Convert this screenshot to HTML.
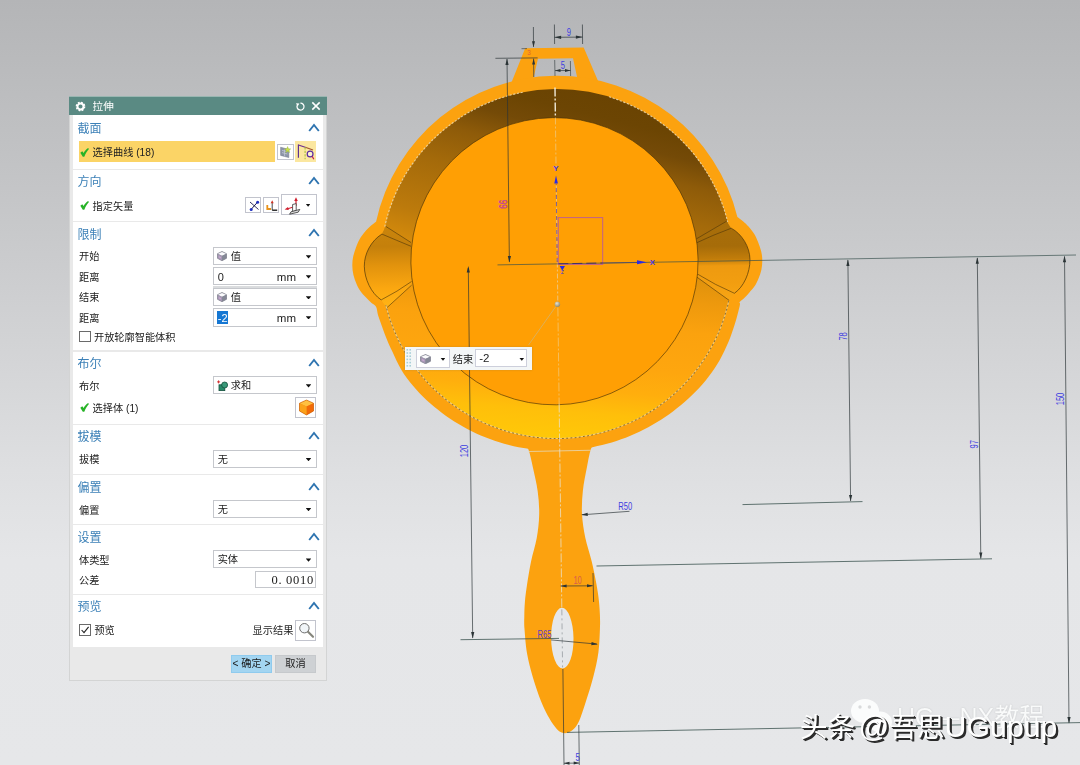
<!DOCTYPE html>
<html lang="zh-CN">
<head>
<meta charset="utf-8">
<title>拉伸</title>
<style>
html,body{margin:0;padding:0;}
body{width:1080px;height:765px;overflow:hidden;position:relative;
  font-family:"Liberation Sans","Noto Sans CJK SC",sans-serif;
  background:linear-gradient(to bottom,#b4b5b7 0px,#c5c6c8 200px,#d6d7d9 385px,#dedfe1 470px,#e5e6e8 560px,#e6e7e9 765px);}
#scene{position:absolute;left:0;top:0;width:1080px;height:765px;}
#dlg{will-change:transform;position:absolute;left:69px;top:96px;width:258px;height:585px;background:#e9e9e9;box-shadow:0 0 0 1px #d3d4d4 inset;}
#dlg .hd{position:absolute;left:0;top:0;width:258px;height:19px;background:#5a8a83;color:#fff;box-shadow:0 1px 0 #99b6b1 inset;}
#dlg .hd .ttl{position:absolute;left:23.6px;top:2.5px;font-size:10.6px;line-height:14px;white-space:nowrap;}
#dlg .sec{position:absolute;left:4px;width:250px;background:#fff;}
#dlg .st{position:absolute;font-size:12px;color:#3c80b7;line-height:16px;white-space:nowrap;}
#dlg .lb{position:absolute;font-size:10.2px;color:#222;line-height:14px;white-space:nowrap;}
#dlg .chev{position:absolute;}
#dlg .dd{position:absolute;box-sizing:border-box;border:1px solid #c5c7cc;background:#fff;}
#dlg .dd .t{position:absolute;top:calc(50% + 1px);transform:translateY(-50%);font-size:10.2px;line-height:14px;color:#1a1a1a;white-space:nowrap;}
#dlg .ar{position:absolute;right:4.2px;top:7px;width:5.6px;height:3.3px;background:#111;clip-path:polygon(0 0,100% 0,50% 100%);}
#dlg .ib{position:absolute;box-sizing:border-box;border:1px solid #c2c4cd;background:#fff;}
#dlg .cb{position:absolute;width:11.6px;height:11.6px;box-sizing:border-box;border:1px solid #6a6a6a;background:#fff;}
#dlg .btn{position:absolute;box-sizing:border-box;border:1px solid #999;font-size:10.2px;line-height:16px;text-align:center;color:#1a1a1a;white-space:nowrap;}
#fbox{will-change:transform;position:absolute;left:404.7px;top:346.8px;width:127.1px;height:22.9px;background:#f3f6f7;box-shadow:0 0 2px rgba(120,110,80,0.35);}
#fbox .grip{position:absolute;left:1px;top:1px;}
#fbox .fd{position:absolute;box-sizing:border-box;border:1px solid #cdcfdb;background:#fff;}
#fbox .ar{position:absolute;width:5px;height:3px;background:#111;clip-path:polygon(0 0,100% 0,50% 100%);}
#fbox .fl{position:absolute;left:47.8px;top:5.6px;font-size:10.2px;line-height:14px;color:#1a1a1a;white-space:nowrap;}
#fbox .fv{position:absolute;left:3.6px;top:1.7px;font-size:11.5px;line-height:14px;color:#222;white-space:nowrap;}
#wm2{will-change:transform;position:absolute;left:849px;top:697px;width:210px;height:42px;font-size:25px;line-height:40px;color:#f9fafa;white-space:nowrap;text-shadow:0 0 1.5px #b9bbbd;}
#wm{will-change:transform;position:absolute;left:799.5px;top:708.5px;font-size:28.6px;line-height:36px;color:#fff;white-space:nowrap;letter-spacing:0px;text-shadow:2.2px 2.2px 0.5px #2a2a2a,1.1px 1.1px 0.4px #2a2a2a;}
#wm .c{font-size:27.6px;}
#wm .l{font-size:30.3px;word-spacing:-5px;}
</style>
</head>
<body>
<svg id="scene" viewBox="0 0 1080 765">
<defs>
<linearGradient id="wall" gradientUnits="userSpaceOnUse" x1="45" y1="-172" x2="-45" y2="172">
<stop offset="0" stop-color="#6a4302"/>
<stop offset="0.07" stop-color="#6c4503"/>
<stop offset="0.13" stop-color="#744a07"/>
<stop offset="0.2" stop-color="#8e5b09"/>
<stop offset="0.3" stop-color="#a46a0a"/>
<stop offset="0.45" stop-color="#bc7a0c"/>
<stop offset="0.52" stop-color="#cf870c"/>
<stop offset="0.6" stop-color="#ec980d"/>
<stop offset="0.67" stop-color="#f9a10e"/>
<stop offset="0.73" stop-color="#fea60e"/>
<stop offset="0.82" stop-color="#ffad0d"/>
<stop offset="0.91" stop-color="#ffc00a"/>
<stop offset="1" stop-color="#ffc808"/>
</linearGradient>
<linearGradient id="wall2" gradientUnits="userSpaceOnUse" x1="8" y1="0" x2="-8" y2="175">
<stop offset="0" stop-color="#dc900c"/>
<stop offset="0.17" stop-color="#ee990d"/>
<stop offset="0.34" stop-color="#fba20e"/>
<stop offset="0.57" stop-color="#fea60e"/>
<stop offset="0.71" stop-color="#ffae0d"/>
<stop offset="0.84" stop-color="#ffbf0a"/>
<stop offset="1" stop-color="#ffc808"/>
</linearGradient>
<linearGradient id="chR" gradientUnits="userSpaceOnUse" x1="0" y1="-38" x2="0" y2="38">
<stop offset="0" stop-color="#a86e0a"/><stop offset="0.3" stop-color="#a66c09"/><stop offset="0.47" stop-color="#c27d0a"/><stop offset="0.56" stop-color="#ee9a10"/><stop offset="0.8" stop-color="#f29e10"/><stop offset="1" stop-color="#f7a515"/>
</linearGradient>
<linearGradient id="chL" gradientUnits="userSpaceOnUse" x1="0" y1="-38" x2="0" y2="38">
<stop offset="0" stop-color="#c9840c"/><stop offset="0.25" stop-color="#c5800b"/><stop offset="0.5" stop-color="#e2930d"/><stop offset="0.8" stop-color="#fba710"/><stop offset="1" stop-color="#ffb214"/>
</linearGradient>
<radialGradient id="ball" cx="0.4" cy="0.35" r="0.7"><stop offset="0" stop-color="#e8e4d0"/><stop offset="1" stop-color="#8a8468"/></radialGradient>
</defs>
<g id="pan" transform="translate(557.3,263.4) rotate(-0.75)">
<path d="M-44.5,-179 L-29.3,-215.5 L29.2,-215.5 L44.3,-179 Z M-22,-183 L-16.7,-204.9 L18.4,-204.9 L22.8,-183 Z" fill="#fca20f" fill-rule="evenodd"/>
<path d="M180.7,-44.0 C181.7,-43.2 184.7,-41.1 186.5,-39.5 C188.3,-37.9 189.9,-36.5 191.7,-34.3 C193.5,-32.1 195.9,-29.1 197.5,-26.5 C199.1,-23.9 200.0,-21.3 201.1,-18.5 C202.2,-15.7 203.3,-12.5 204.0,-9.5 C204.7,-6.5 205.0,-3.6 205.0,-0.5 C205.0,2.6 204.7,6.0 204.0,9.0 C203.3,12.0 202.2,14.9 201.1,17.6 C200.0,20.3 198.9,22.7 197.3,25.0 C195.7,27.3 193.5,29.6 191.7,31.6 C189.9,33.6 188.2,35.4 186.5,37.0 C184.8,38.6 182.5,39.9 181.8,41.0 C181.1,42.1 182.5,41.4 182.1,43.4 C181.8,45.4 180.6,49.8 179.7,52.9 C178.9,56.1 177.9,59.2 176.9,62.4 C175.8,65.5 174.8,68.6 173.7,71.7 C172.6,74.8 171.4,77.9 170.1,80.9 C168.7,84.0 167.3,87.0 165.9,89.9 C164.4,92.9 162.8,95.9 161.2,98.7 C159.5,101.6 157.7,104.4 155.8,107.1 C154.0,109.8 152.0,112.5 149.9,115.1 C147.9,117.8 145.8,120.3 143.6,122.8 C141.4,125.3 139.0,127.7 136.7,130.0 C134.3,132.3 131.9,134.6 129.4,136.8 C127.0,139.0 124.5,141.2 121.9,143.3 C119.3,145.3 116.7,147.3 114.0,149.3 C111.3,151.2 108.6,153.1 105.8,154.9 C103.1,156.7 100.3,158.5 97.4,160.2 C94.6,161.8 91.7,163.4 88.8,165.0 C85.8,166.5 82.9,167.9 79.9,169.3 C76.9,170.7 73.9,172.0 70.8,173.2 C67.7,174.5 64.6,175.6 61.5,176.7 C58.4,177.8 55.3,178.8 52.1,179.7 C48.9,180.6 45.7,181.4 42.5,182.2 C39.3,182.9 36.1,183.6 32.8,184.2 C29.6,184.8 26.3,185.3 23.0,185.7 C19.8,186.1 16.5,186.4 13.2,186.7 C9.9,186.9 6.6,187.0 3.3,187.2 C0.0,187.3 -3.3,187.4 -6.6,187.3 C-9.9,187.3 -13.2,187.1 -16.5,186.8 C-19.8,186.6 -23.1,186.2 -26.4,185.8 C-29.7,185.4 -32.9,184.8 -36.2,184.2 C-39.5,183.6 -42.7,182.9 -45.9,182.2 C-49.1,181.4 -52.3,180.5 -55.5,179.6 C-58.7,178.6 -61.8,177.6 -65.0,176.5 C-68.1,175.4 -71.2,174.2 -74.3,172.9 C-77.3,171.7 -80.3,170.3 -83.3,168.9 C-86.3,167.4 -89.3,165.9 -92.2,164.4 C-95.1,162.8 -98.0,161.1 -100.8,159.4 C-103.7,157.6 -106.5,155.8 -109.2,153.9 C-111.9,152.1 -114.6,150.1 -117.2,148.1 C-119.9,146.0 -122.5,143.9 -125.0,141.8 C-127.5,139.6 -130.0,137.4 -132.4,135.1 C-134.8,132.8 -137.1,130.4 -139.4,128.0 C-141.6,125.5 -143.8,123.0 -145.9,120.4 C-148.0,117.8 -150.0,115.2 -152.0,112.5 C-153.9,109.8 -155.8,107.1 -157.4,104.2 C-159.1,101.3 -160.5,98.3 -162.0,95.3 C-163.4,92.3 -164.6,89.3 -166.0,86.3 C-167.3,83.3 -168.8,80.3 -170.0,77.3 C-171.3,74.3 -172.5,71.2 -173.6,68.1 C-174.7,65.1 -175.8,62.0 -176.8,58.9 C-177.9,55.8 -179.0,52.6 -179.9,49.6 C-180.7,46.6 -180.7,43.1 -181.8,41.0 C-182.9,38.9 -184.8,38.6 -186.5,37.0 C-188.2,35.4 -189.9,33.6 -191.7,31.6 C-193.5,29.6 -195.7,27.3 -197.3,25.0 C-198.9,22.7 -200.0,20.3 -201.1,17.6 C-202.2,14.9 -203.3,12.0 -204.0,9.0 C-204.7,6.0 -205.0,2.6 -205.0,-0.5 C-205.0,-3.6 -204.7,-6.5 -204.0,-9.5 C-203.3,-12.5 -202.2,-15.7 -201.1,-18.5 C-200.0,-21.3 -199.1,-23.9 -197.5,-26.5 C-195.9,-29.1 -193.5,-32.1 -191.7,-34.3 C-189.9,-36.5 -188.3,-37.9 -186.5,-39.5 C-184.7,-41.1 -181.7,-43.2 -180.7,-44.0 A185.5,185.5 0 0 1 180.7,-44 Z" fill="#fca20f"/>
<path d="M42.0,172.0 C41.0,173.3 37.8,177.7 36.0,180.0 C34.2,182.3 32.7,182.0 31.2,186.0 C29.7,190.0 28.4,197.1 27.0,204.0 C25.6,210.9 23.5,219.8 22.6,227.6 C21.7,235.4 21.1,243.2 21.4,251.0 C21.7,258.8 22.9,266.8 24.4,274.6 C25.9,282.4 28.6,290.1 30.4,298.0 C32.2,305.9 33.9,315.0 35.0,321.7 C36.1,328.4 36.7,332.9 37.2,338.0 C37.7,343.1 37.9,347.5 38.0,352.0 C38.1,356.5 38.2,358.8 37.9,365.0 C37.6,371.2 37.2,381.4 36.0,389.5 C34.8,397.6 32.8,405.6 30.6,413.7 C28.4,421.8 25.3,431.1 23.0,438.0 C20.7,444.9 18.8,450.7 17.0,455.0 C15.2,459.3 13.8,461.7 12.0,464.0 C10.2,466.3 8.2,467.6 6.5,468.6 C4.8,469.6 3.2,469.8 1.5,469.8 C-0.2,469.8 -1.9,469.4 -3.5,468.4 C-5.0,467.4 -6.1,466.2 -7.8,464.0 C-9.5,461.8 -11.5,459.3 -13.8,455.0 C-16.1,450.7 -19.1,444.9 -21.8,438.0 C-24.5,431.1 -27.5,421.8 -29.8,413.7 C-32.1,405.6 -34.1,397.6 -35.4,389.5 C-36.7,381.4 -37.2,371.2 -37.6,365.0 C-38.0,358.8 -37.7,356.5 -37.6,352.0 C-37.5,347.5 -37.3,343.1 -36.8,338.0 C-36.3,332.9 -35.7,328.4 -34.6,321.7 C-33.5,315.0 -31.9,305.9 -30.2,298.0 C-28.5,290.1 -25.7,282.4 -24.2,274.6 C-22.7,266.8 -21.7,258.8 -21.4,251.0 C-21.1,243.2 -21.7,235.4 -22.6,227.6 C-23.5,219.8 -25.6,210.9 -27.0,204.0 C-28.4,197.1 -29.7,190.0 -31.2,186.0 C-32.7,182.0 -34.2,182.3 -36.0,180.0 C-37.8,177.7 -41.0,173.3 -42.0,172.0 Z" fill="#fca20f"/>
<ellipse cx="0.1" cy="374.8" rx="11.2" ry="30.3" fill="#e5e7e9"/>
<path d="M-176.5,1 L-176.5,0.3 A176,174.8 0 0 1 175.5,0.3 L175.5,1 Z" fill="url(#wall)"/>
<path d="M175.5,0.3 A176,174.8 0 0 1 -176.5,0.3 Z" fill="url(#wall2)"/>
<path d="M139.2,-22.6 L169.7,-39.9 L174.4,-32.9 C185,-27 192.7,-14 192.7,-1.5 C192.7,12 186,26 176.7,32.2 L171.3,39.2 L139.2,15.4 Z" fill="url(#chR)"/>
<path d="M-146,-22.8 L-171.1,-39.3 L-175,-31.6 C-186,-25 -193,-12 -193,0.3 C-193,13 -186.5,27.5 -176.6,34.2 L-171.1,42.2 L-146,19.9 Z" fill="url(#chL)"/>
<path d="M174.4,-32.9 C185,-27 192.7,-14 192.7,-1.5 C192.7,12 186,26 176.7,32.2 M-175,-31.6 C-186,-25 -193,-12 -193,0.3 C-193,13 -186.5,27.5 -176.6,34.2" stroke="#4f3608" stroke-width="0.7" fill="none"/>
<path d="M169.7,-39.9 L139.2,-22.6 M174.4,-32.9 Q155,-26 139.2,-18.6 M176.7,32.2 Q158,24 139.2,12 M171.3,39.2 L139.2,15.4 M-171.1,-39.3 L-146,-22.8 M-175,-31.6 Q-160,-25 -146,-19 M-176.6,34.2 Q-160,26 -146,16.2 M-171.1,42.2 L-146,19.9" stroke="#4f3608" stroke-width="0.6" fill="none"/>
<circle cx="-2.8" cy="-2.2" r="143.6" fill="#ff9f04" stroke="#4a3208" stroke-width="0.65"/>
<path d="M-172.0,-39.0 A176,174.8 0 0 1 -31.1,-171.8 M53.9,-165.9 A176,174.8 0 0 1 171.0,-39.0" fill="none" stroke="#ecd9b0" stroke-width="1.1" stroke-dasharray="2.2 1.6" opacity="0.85"/>
<path d="M171.0,39.6 A176,174.8 0 0 1 -172.0,39.6" fill="none" stroke="#f0dca6" stroke-width="1.1" opacity="0.7"/>
<path d="M171.0,39.6 A176,174.8 0 0 1 -172.0,39.6" fill="none" stroke="#5e4a1e" stroke-width="1" stroke-dasharray="1.8 2.4" opacity="0.7"/>
<path d="M-31.5,187.6 L31,187.2" stroke="#e4dcc4" stroke-width="1" opacity="0.75"/>
<path d="M0,-176 L0,-146" stroke="#f0ead8" stroke-width="1.4" stroke-dasharray="9 2 2 2"/>
<path d="M0,-146 L0,-96" stroke="#e9d9b0" stroke-width="1" stroke-dasharray="7 2 2 2" opacity="0.55"/>
<path d="M0,-78 L0,40" stroke="#e6dcc8" stroke-width="1" stroke-dasharray="5 2 2 2" opacity="0.6"/>
<path d="M0,44 L0,140" stroke="#f0dcae" stroke-width="1" stroke-dasharray="9 2 2 2" opacity="0.5"/>
<path d="M0,140 L0,344" stroke="#ebe1c8" stroke-width="1" stroke-dasharray="9 2 2 2" opacity="0.8"/>
<path d="M0,346 L0,404" stroke="#9aa0a4" stroke-width="0.9" stroke-dasharray="6 3 2 3" opacity="0.9"/>
</g>
<g id="dims">
<path d="M497.5,264.9 L1076,255.0" stroke="#36504c" stroke-width="0.68" fill="none" />
<path d="M554.4,24.5 L554.6,44" stroke="#2b3436" stroke-width="0.68" fill="none" />
<path d="M582.4,24.5 L582.6,44" stroke="#2b3436" stroke-width="0.68" fill="none" />
<path d="M554.5,37.3 L582.5,37.1" stroke="#2b3436" stroke-width="0.68" fill="none" />
<path d="M554.6,37.3 L561.1,35.7 L561.1,38.9 Z" fill="#2b3436"/>
<path d="M582.4,37.1 L575.9,38.7 L575.9,35.5 Z" fill="#2b3436"/>
<text transform="translate(568.8,31.4) scale(0.66,1)" font-family="Liberation Sans, sans-serif" font-size="11.5" fill="#3d3de0" text-anchor="middle" dominant-baseline="central">9</text>
<path d="M554.7,60 L555,76" stroke="#2b3436" stroke-width="0.59" fill="none" />
<path d="M570.4,61 L570.6,76" stroke="#2b3436" stroke-width="0.59" fill="none" />
<path d="M555,70.6 L570.5,70.5" stroke="#2b3436" stroke-width="0.68" fill="none" />
<path d="M555.0,70.6 L560.5,69.1 L560.5,72.1 Z" fill="#2b3436"/>
<path d="M570.5,70.5 L565.0,72.0 L565.0,69.0 Z" fill="#2b3436"/>
<text transform="translate(562.8,65.2) scale(0.66,1)" font-family="Liberation Sans, sans-serif" font-size="11.5" fill="#3d3de0" text-anchor="middle" dominant-baseline="central">5</text>
<path d="M533.4,27 L533.5,47" stroke="#2b3436" stroke-width="0.68" fill="none" />
<path d="M533.5,47.3 L532.0,41.3 L535.0,41.3 Z" fill="#2b3436"/>
<path d="M533.6,58.6 L533.8,77" stroke="#2b3436" stroke-width="0.68" fill="none" />
<path d="M533.6,58.4 L535.1,64.4 L532.1,64.4 Z" fill="#2b3436"/>
<path d="M521.5,48.7 L527,48.6" stroke="#2b3436" stroke-width="0.59" fill="none" />
<text transform="translate(529,52.6) scale(0.8,1)" font-family="Liberation Sans, sans-serif" font-size="8" fill="#e0603a" text-anchor="middle" dominant-baseline="central">3</text>
<path d="M495.4,58.3 L537.6,57.9" stroke="#2b3436" stroke-width="0.68" fill="none" />
<path d="M507,59 L509.4,262" stroke="#2b3436" stroke-width="0.68" fill="none" />
<path d="M507.0,58.6 L508.6,65.1 L505.4,65.1 Z" fill="#2b3436"/>
<path d="M509.4,262.4 L507.8,255.9 L511.0,255.9 Z" fill="#2b3436"/>
<text transform="translate(502.8,204.2) rotate(-90) scale(0.7,1)" font-family="Liberation Sans, sans-serif" font-size="11.5" fill="#c2409c" stroke="#c2409c" stroke-width="0.35" text-anchor="middle" dominant-baseline="central">66</text>
<path d="M468.3,268 L472.7,638" stroke="#2b3436" stroke-width="0.68" fill="none" />
<path d="M468.3,266.0 L469.9,272.5 L466.7,272.5 Z" fill="#2b3436"/>
<path d="M472.7,638.6 L471.1,632.1 L474.3,632.1 Z" fill="#2b3436"/>
<path d="M460.5,639.7 L559,638.4" stroke="#36504c" stroke-width="0.77" fill="none" />
<text transform="translate(464.2,451) rotate(-90) scale(0.66,1)" font-family="Liberation Sans, sans-serif" font-size="11.5" fill="#3d3de0" text-anchor="middle" dominant-baseline="central">120</text>
<path d="M847.9,260 L850.6,501" stroke="#2b3436" stroke-width="0.68" fill="none" />
<path d="M847.9,259.6 L849.5,266.1 L846.3,266.1 Z" fill="#2b3436"/>
<path d="M850.6,501.6 L849.0,495.1 L852.2,495.1 Z" fill="#2b3436"/>
<path d="M742.5,504.6 L862.5,501.6" stroke="#36504c" stroke-width="0.77" fill="none" />
<text transform="translate(843,336.4) rotate(-90) scale(0.66,1)" font-family="Liberation Sans, sans-serif" font-size="11.5" fill="#3d3de0" text-anchor="middle" dominant-baseline="central">78</text>
<path d="M977.3,258 L980.8,558.6" stroke="#2b3436" stroke-width="0.68" fill="none" />
<path d="M977.3,257.3 L978.9,263.8 L975.7,263.8 Z" fill="#2b3436"/>
<path d="M980.8,559.0 L979.2,552.5 L982.4,552.5 Z" fill="#2b3436"/>
<path d="M596.5,566 L992,558.8" stroke="#36504c" stroke-width="0.77" fill="none" />
<text transform="translate(973.6,444.2) rotate(-90) scale(0.66,1)" font-family="Liberation Sans, sans-serif" font-size="11.5" fill="#3d3de0" text-anchor="middle" dominant-baseline="central">97</text>
<path d="M1064.5,256.5 L1069,723" stroke="#2b3436" stroke-width="0.68" fill="none" />
<path d="M1064.5,255.8 L1066.1,262.3 L1062.9,262.3 Z" fill="#2b3436"/>
<path d="M1069.0,723.4 L1067.4,716.9 L1070.6,716.9 Z" fill="#2b3436"/>
<path d="M567,732.4 L1080,722.6" stroke="#36504c" stroke-width="0.77" fill="none" />
<text transform="translate(1060,399) rotate(-90) scale(0.66,1)" font-family="Liberation Sans, sans-serif" font-size="11.5" fill="#3d3de0" text-anchor="middle" dominant-baseline="central">150</text>
<path d="M629.5,511.3 L582,514.8" stroke="#2b3436" stroke-width="0.68" fill="none" />
<path d="M581.2,514.8 L587.6,512.8 L587.8,515.9 Z" fill="#2b3436"/>
<text transform="translate(625.2,506) scale(0.66,1)" font-family="Liberation Sans, sans-serif" font-size="11.5" fill="#3d3de0" text-anchor="middle" dominant-baseline="central">R50</text>
<path d="M593,573 L593.6,602" stroke="#2b3436" stroke-width="0.68" fill="none" />
<path d="M560.6,586 L592.6,585.8" stroke="#2b3436" stroke-width="0.68" fill="none" />
<path d="M560.6,586.0 L566.6,584.5 L566.6,587.5 Z" fill="#2b3436"/>
<path d="M593.0,585.8 L587.0,587.3 L587.0,584.3 Z" fill="#2b3436"/>
<text transform="translate(577.6,580) scale(0.66,1)" font-family="Liberation Sans, sans-serif" font-size="11.5" fill="#d8604a" text-anchor="middle" dominant-baseline="central">10</text>
<path d="M551,639.9 L597,644.1" stroke="#2b3436" stroke-width="0.68" fill="none" />
<path d="M597.9,644.2 L591.3,645.2 L591.6,642.0 Z" fill="#2b3436"/>
<text transform="translate(544.4,634) scale(0.66,1)" font-family="Liberation Sans, sans-serif" font-size="11.5" fill="#5a3ad0" text-anchor="middle" dominant-baseline="central">R65</text>
<path d="M562.9,669 L564,765" stroke="#2b3436" stroke-width="0.68" fill="none" />
<path d="M578.8,725 L579.3,765" stroke="#2b3436" stroke-width="0.68" fill="none" />
<path d="M564,763.2 L579.2,763.1" stroke="#2b3436" stroke-width="0.68" fill="none" />
<path d="M564.0,763.2 L569.5,761.7 L569.5,764.7 Z" fill="#2b3436"/>
<path d="M579.2,763.1 L573.7,764.6 L573.7,761.6 Z" fill="#2b3436"/>
<text transform="translate(577.6,757.2) scale(0.66,1)" font-family="Liberation Sans, sans-serif" font-size="11.5" fill="#3d3de0" text-anchor="middle" dominant-baseline="central">5</text>
</g>
<g id="csys">
<rect x="558.3" y="217.6" width="44.4" height="46.8" fill="none" stroke="#c0608c" stroke-width="1"/>
<path d="M558.3,263.8 L603,263" stroke="#3a2a6a" stroke-width="0.9" stroke-dasharray="10 4"/>
<path d="M557.2,262 L556.2,184 " stroke="#5a4ab0" stroke-width="0.8" stroke-dasharray="4 3"/>
<path d="M556,175.5 L557.9,183.6 L554.3,183.6 Z" fill="#2a2ae6"/>
<path d="M603,263 L637,262.4" stroke="#4a4a70" stroke-width="0.8"/>
<path d="M646.8,262.2 L637,264.3 L637,260.2 Z" fill="#2a2ae6"/>
<path d="M559.6,266 L565,266 L562.3,270.4 Z" fill="#2a2ae6"/>
<text x="556" y="168.4" font-family="Liberation Sans, sans-serif" font-size="8" font-weight="bold" fill="#4a3ae0" text-anchor="middle" dominant-baseline="central">Y</text>
<text x="652.4" y="262.6" font-family="Liberation Sans, sans-serif" font-size="8" font-weight="bold" fill="#4a3ae0" text-anchor="middle" dominant-baseline="central">X</text>
<text x="562.4" y="272" font-family="Liberation Sans, sans-serif" font-size="4.5" fill="#2a2ae6" text-anchor="middle" dominant-baseline="central">Z</text>
<path d="M556.5,305.5 L528.5,345" stroke="#c9b98a" stroke-width="0.8" opacity="0.8"/>
<circle cx="557.4" cy="304.2" r="2.7" fill="url(#ball)"/>
</g>
</svg>
<div id="dlg">
<div class="hd">
<svg style="position:absolute;left:6px;top:4.5px" width="11" height="11" viewBox="0 0 11 11"><circle cx="5.5" cy="5.5" r="4" fill="none" stroke="#fff" stroke-width="1.7" stroke-dasharray="1.8 1.34" /><circle cx="5.5" cy="5.5" r="3" fill="none" stroke="#fff" stroke-width="1.9"/></svg>
<span class="ttl">拉伸</span>
<svg style="position:absolute;left:225.5px;top:4.5px" width="11" height="11" viewBox="0 0 11 11"><path d="M5.4,2.1 A3.5,3.5 0 1 1 2.3,4.2" fill="none" stroke="#fff" stroke-width="1.25"/><path d="M1,2.2 L4.4,2.6 L2.6,5.4 Z" fill="#fff"/></svg>
<svg style="position:absolute;left:242px;top:5px" width="10" height="10" viewBox="0 0 10 10"><path d="M1.3,1.4 L8.7,8.6 M8.7,1.4 L1.3,8.6" stroke="#fff" stroke-width="1.55" fill="none"/></svg>
</div>
<div class="sec" style="top:19.0px;height:53.8px"></div>
<div class="st" style="left:8.5px;top:24.9px">截面</div>
<svg class="chev" style="left:239px;top:26.6px" width="12" height="9" viewBox="0 0 12 9"><polyline points="1.2,8 6,2 10.8,8" fill="none" stroke="#2e74b0" stroke-width="1.9"/></svg>
<div style="position:absolute;left:10px;top:44.8px;width:196.3px;height:21.7px;background:#fbd466"></div>
<svg style="position:absolute;left:11px;top:51.5px" width="9" height="9" viewBox="0 0 9 9"><path d="M0.3,4.7 L2.3,3.2 L3.6,5 C4.7,3 6.2,1.3 8.1,0.1 L8.9,1 C7,3.2 5.5,5.8 4.3,8.8 L2.8,8.8 Z" fill="#27b327"/></svg>
<div class="lb" style="left:23.6px;top:50px;">选择曲线 (18)</div>
<div class="ib" style="left:208.2px;top:48px;width:16.4px;height:16.2px"><svg width="15" height="15" viewBox="0 0 15 15" style="position:absolute;left:0px;top:0px"><path d="M2.6,2.2 L10.8,4.4 L10.8,12.6 L2.6,10.4 Z" fill="#8d95a8" stroke="#6f7788" stroke-width="0.5"/><path d="M4,5.4 L9.4,6.8 M4,7.6 L9.4,9 M6.6,4.4 L6.6,11.4" stroke="#c9cedb" stroke-width="0.7" fill="none"/><path d="M9.6,1.6 L10.4,3.8 L12.7,3.9 L10.9,5.3 L11.5,7.6 L9.6,6.3 L7.7,7.6 L8.3,5.3 L6.5,3.9 L8.8,3.8 Z" fill="#cbe24c" stroke="#8fae2c" stroke-width="0.4"/></svg></div>
<div style="position:absolute;left:226.2px;top:44.8px;width:21.3px;height:21.7px;background:#fbe7a0"><svg width="21" height="22" viewBox="0 0 21 22" style="position:absolute;left:0;top:0"><path d="M3.4,3.4 L3.4,16.8" stroke="#5a2d91" stroke-width="1.15"/><path d="M3.4,4 L11,6.6" stroke="#6a2d91" stroke-width="1.1"/><path d="M11,6.6 L18,9" stroke="#a0522d" stroke-width="1.1"/><path d="M10.1,6.2 L10.1,18.2" stroke="#a9c23a" stroke-width="1.1" stroke-dasharray="2.4 1.1"/><circle cx="15.1" cy="13" r="2.9" fill="#fdf3cf" stroke="#5a2da0" stroke-width="1.2"/><path d="M17.2,15.2 L18.8,18.2" stroke="#c02050" stroke-width="1.2"/></svg></div>
<div class="sec" style="top:74.3px;height:51.0px"></div>
<div class="st" style="left:8.5px;top:77.9px">方向</div>
<svg class="chev" style="left:239px;top:79.6px" width="12" height="9" viewBox="0 0 12 9"><polyline points="1.2,8 6,2 10.8,8" fill="none" stroke="#2e74b0" stroke-width="1.9"/></svg>
<svg style="position:absolute;left:11px;top:105px" width="9" height="9" viewBox="0 0 9 9"><path d="M0.3,4.7 L2.3,3.2 L3.6,5 C4.7,3 6.2,1.3 8.1,0.1 L8.9,1 C7,3.2 5.5,5.8 4.3,8.8 L2.8,8.8 Z" fill="#27b327"/></svg>
<div class="lb" style="left:23.6px;top:103.6px;">指定矢量</div>
<div class="ib" style="left:176.3px;top:101px;width:16.2px;height:15.8px"><svg width="14" height="14" viewBox="0 0 14 14" style="position:absolute;left:0.5px;top:0.5px"><path d="M3,3 L11.5,10.5" stroke="#1a1a50" stroke-width="0.9"/><path d="M11,2.6 L3.6,11" stroke="#1a1a50" stroke-width="1"/><circle cx="10.6" cy="3.2" r="1.5" fill="#2030c0"/><circle cx="4.2" cy="10.4" r="1.5" fill="#2030c0"/></svg></div>
<div class="ib" style="left:194.3px;top:101px;width:16.2px;height:15.8px"><svg width="14" height="14" viewBox="0 0 14 14" style="position:absolute;left:0.5px;top:0.5px"><path d="M2.3,6 L2.3,10 L6,10" fill="none" stroke="#e8921a" stroke-width="1.8"/><path d="M7.2,3 L7.2,11.2" stroke="#333" stroke-width="0.9"/><path d="M7.2,1.2 L8.7,4.2 L5.7,4.2 Z" fill="#d03020"/><path d="M7.2,11.2 L12.2,11.2" stroke="#111" stroke-width="1.3"/></svg></div>
<div class="ib" style="left:212px;top:98px;width:35.5px;height:21px"><svg width="22" height="20" viewBox="0 0 22 20" style="position:absolute;left:0.5px;top:0px"><path d="M13,5 L13,11" stroke="#d02030" stroke-width="1.2"/><path d="M13,2.2 L14.8,6 L11.2,6 Z" fill="#d02030"/><path d="M9.5,12.3 L4,14" stroke="#d02030" stroke-width="1.2"/><path d="M1.6,14.6 L5,12 L5.8,15 Z" fill="#d02030"/><path d="M9.6,9.5 L9.6,16.6 L13.2,15.6 L13.2,8.6 Z" fill="#fff" stroke="#333" stroke-width="0.8"/><path d="M8,16.8 L16.8,14.4 L15.2,17.2 L6.6,19.2 Z" fill="#ddd" stroke="#333" stroke-width="0.8"/></svg><i class="ar" style="right:5.2px;top:9px;width:4.4px;height:2.7px"></i></div>
<div class="sec" style="top:126.3px;height:128.2px"></div>
<div class="st" style="left:8.5px;top:130.7px">限制</div>
<svg class="chev" style="left:239px;top:132.4px" width="12" height="9" viewBox="0 0 12 9"><polyline points="1.2,8 6,2 10.8,8" fill="none" stroke="#2e74b0" stroke-width="1.9"/></svg>
<div class="lb" style="left:10px;top:154.2px;">开始</div>
<div class="lb" style="left:10px;top:175px;">距离</div>
<div class="lb" style="left:10px;top:195.2px;">结束</div>
<div class="lb" style="left:10px;top:215.6px;">距离</div>
<div class="dd" style="left:144.25px;top:151.3px;width:103.25px;height:18.0px"><svg style="position:absolute;left:3px;top:3px" width="10" height="10" viewBox="0 0 10 10"><path d="M5,0.5 L9.5,2.7 L9.5,7.3 L5,9.7 L0.5,7.3 L0.5,2.7 Z" fill="#8e8f9d" stroke="#7a7b88" stroke-width="0.7"/><path d="M5,0.9 L9,2.8 L5,4.8 L1,2.8 Z" fill="#fbfbfd"/><path d="M0.8,3.1 L5,5.1 L5,9.4 L0.8,7.2 Z" fill="#a597b3"/><path d="M5,5.1 L9.2,3.1 L9.2,7.2 L5,9.4 Z" fill="#858896"/><path d="M1.8,5 L4,6 L4,7.6 L1.8,6.5 Z" fill="#c7a9cf"/></svg><span class="t" style="left:16.6px">值</span><i class="ar"></i></div>
<div class="dd" style="left:144.25px;top:171.3px;width:103.25px;height:18.2px"><span class="t" style="left:3.4px;font-size:11px">0</span><span class="t" style="left:62.6px;font-size:11.5px">mm</span><i class="ar"></i></div>
<div style="position:absolute;left:144.25px;top:189.5px;width:103.25px;height:2.6px;background:#dadcde"></div>
<div class="dd" style="left:144.25px;top:192.2px;width:103.25px;height:18.3px"><svg style="position:absolute;left:3px;top:3px" width="10" height="10" viewBox="0 0 10 10"><path d="M5,0.5 L9.5,2.7 L9.5,7.3 L5,9.7 L0.5,7.3 L0.5,2.7 Z" fill="#8e8f9d" stroke="#7a7b88" stroke-width="0.7"/><path d="M5,0.9 L9,2.8 L5,4.8 L1,2.8 Z" fill="#fbfbfd"/><path d="M0.8,3.1 L5,5.1 L5,9.4 L0.8,7.2 Z" fill="#a597b3"/><path d="M5,5.1 L9.2,3.1 L9.2,7.2 L5,9.4 Z" fill="#858896"/><path d="M1.8,5 L4,6 L4,7.6 L1.8,6.5 Z" fill="#c7a9cf"/></svg><span class="t" style="left:16.6px">值</span><i class="ar"></i></div>
<div class="dd" style="left:144.25px;top:212.2px;width:103.25px;height:18.5px"><span style="position:absolute;left:2.8px;top:2.1px;width:10.8px;height:13px;background:#1577d3"></span><span class="t" style="left:3.6px;font-size:11px;color:#fff">-2</span><span class="t" style="left:62.6px;font-size:11.5px">mm</span><i class="ar"></i></div>
<div class="cb" style="left:10px;top:234.8px"></div>
<div class="lb" style="left:25px;top:235px;">开放轮廓智能体积</div>
<div class="sec" style="top:255.5px;height:72px"></div>
<div class="st" style="left:8.5px;top:259.9px">布尔</div>
<svg class="chev" style="left:239px;top:261.6px" width="12" height="9" viewBox="0 0 12 9"><polyline points="1.2,8 6,2 10.8,8" fill="none" stroke="#2e74b0" stroke-width="1.9"/></svg>
<div class="lb" style="left:10px;top:283.6px;">布尔</div>
<div class="dd" style="left:144.25px;top:280.3px;width:103.25px;height:18.2px"><svg style="position:absolute;left:2.5px;top:2.5px" width="12" height="12" viewBox="0 0 12 12"><rect x="2" y="4.8" width="5.8" height="5.8" fill="#2a8a6a" stroke="#14503c" stroke-width="0.8"/><circle cx="7.6" cy="5" r="3" fill="#3a9a7a" stroke="#14503c" stroke-width="0.8"/><path d="M1.6,0.4 V3.4 M0.1,1.9 H3.1" stroke="#d02020" stroke-width="0.9"/></svg><span class="t" style="left:16.6px">求和</span><i class="ar"></i></div>
<svg style="position:absolute;left:11px;top:307px" width="9" height="9" viewBox="0 0 9 9"><path d="M0.3,4.7 L2.3,3.2 L3.6,5 C4.7,3 6.2,1.3 8.1,0.1 L8.9,1 C7,3.2 5.5,5.8 4.3,8.8 L2.8,8.8 Z" fill="#27b327"/></svg>
<div class="lb" style="left:23.6px;top:305.5px;">选择体 (1)</div>
<div class="ib" style="left:226.3px;top:300.8px;width:21.2px;height:21.2px"><svg width="17" height="17" viewBox="0 0 17 17" style="position:absolute;left:1.6px;top:1.6px"><path d="M8.5,1 L15.5,4.2 L15.5,12 L8.5,16 L1.5,12 L1.5,4.2 Z" fill="#f08a10"/><path d="M8.5,1 L15.5,4.2 L8.5,7.6 L1.5,4.2 Z" fill="#ffc040"/><path d="M8.5,7.6 L15.5,4.2 L15.5,12 L8.5,16 Z" fill="#f26a08"/><path d="M1.5,4.2 L8.5,7.6 L8.5,16 L1.5,12 Z" fill="#fba21a"/><path d="M8.5,1 L15.5,4.2 L15.5,12 L8.5,16 L1.5,12 L1.5,4.2 Z" fill="none" stroke="#c85a08" stroke-width="0.6"/></svg></div>
<div class="sec" style="top:328.5px;height:49.8px"></div>
<div class="st" style="left:8.5px;top:333.2px">拔模</div>
<svg class="chev" style="left:239px;top:334.9px" width="12" height="9" viewBox="0 0 12 9"><polyline points="1.2,8 6,2 10.8,8" fill="none" stroke="#2e74b0" stroke-width="1.9"/></svg>
<div class="lb" style="left:10px;top:357.4px;">拔模</div>
<div class="dd" style="left:144.25px;top:354px;width:103.25px;height:18.3px"><span class="t" style="left:3.4px">无</span><i class="ar"></i></div>
<div class="sec" style="top:379.1px;height:49.2px"></div>
<div class="st" style="left:8.5px;top:383.9px">偏置</div>
<svg class="chev" style="left:239px;top:385.6px" width="12" height="9" viewBox="0 0 12 9"><polyline points="1.2,8 6,2 10.8,8" fill="none" stroke="#2e74b0" stroke-width="1.9"/></svg>
<div class="lb" style="left:10px;top:407.6px;">偏置</div>
<div class="dd" style="left:144.25px;top:404px;width:103.25px;height:18.3px"><span class="t" style="left:3.4px">无</span><i class="ar"></i></div>
<div class="sec" style="top:429.3px;height:68.4px"></div>
<div class="st" style="left:8.5px;top:433.9px">设置</div>
<svg class="chev" style="left:239px;top:435.6px" width="12" height="9" viewBox="0 0 12 9"><polyline points="1.2,8 6,2 10.8,8" fill="none" stroke="#2e74b0" stroke-width="1.9"/></svg>
<div class="lb" style="left:10px;top:457.5px;">体类型</div>
<div class="lb" style="left:10px;top:477.6px;">公差</div>
<div class="dd" style="left:144.25px;top:454.4px;width:103.25px;height:17.9px"><span class="t" style="left:3.4px">实体</span><i class="ar"></i></div>
<div class="dd" style="left:186.3px;top:474.8px;width:61.2px;height:16.8px"><span class="t" style="right:1.6px;font-size:12.5px;font-family:'Liberation Serif','Noto Serif CJK SC',serif;letter-spacing:0.7px">0. 0010</span></div>
<div class="sec" style="top:498.5px;height:52.4px"></div>
<div class="st" style="left:8.5px;top:503.2px">预览</div>
<svg class="chev" style="left:239px;top:504.9px" width="12" height="9" viewBox="0 0 12 9"><polyline points="1.2,8 6,2 10.8,8" fill="none" stroke="#2e74b0" stroke-width="1.9"/></svg>
<div class="cb" style="left:10px;top:528.4px"><svg width="10" height="10" viewBox="0 0 10 10" style="position:absolute;left:0;top:0"><path d="M1.6,5 L4,7.6 L8.6,1.8" fill="none" stroke="#222" stroke-width="1.1"/></svg></div>
<div class="lb" style="left:25.4px;top:528.2px;">预览</div>
<div class="lb" style="left:183.6px;top:528.2px;">显示结果</div>
<div class="ib" style="left:226.3px;top:523.6px;width:21.2px;height:21.2px"><svg width="19" height="19" viewBox="0 0 19 19" style="position:absolute;left:0.6px;top:0.6px"><circle cx="7.4" cy="7.2" r="4.7" fill="#f1f5f8" stroke="#6e6e6e" stroke-width="1"/><path d="M11,10.8 L16,15.8" stroke="#85857c" stroke-width="2.1" stroke-linecap="round"/></svg></div>
<div class="btn" style="left:162px;top:559px;width:41px;height:18.3px;background:#a3d5f1;border-color:#8fcbee">&lt; 确定 &gt;</div>
<div class="btn" style="left:206.3px;top:559px;width:40.5px;height:18.3px;background:#ced1d4;border-color:#c6c9cc">取消</div>
</div>
<div id="fbox">
<svg class="grip" width="6" height="21" viewBox="0 0 6 21"><g fill="#a9cfd8"><rect x="0.5" y="1" width="1.6" height="1.6"/><rect x="3.4" y="1" width="1.6" height="1.6"/><rect x="0.5" y="4.2" width="1.6" height="1.6"/><rect x="3.4" y="4.2" width="1.6" height="1.6"/><rect x="0.5" y="7.4" width="1.6" height="1.6"/><rect x="3.4" y="7.4" width="1.6" height="1.6"/><rect x="0.5" y="10.6" width="1.6" height="1.6"/><rect x="3.4" y="10.6" width="1.6" height="1.6"/><rect x="0.5" y="13.8" width="1.6" height="1.6"/><rect x="3.4" y="13.8" width="1.6" height="1.6"/><rect x="0.5" y="17" width="1.6" height="1.6"/><rect x="3.4" y="17" width="1.6" height="1.6"/></g></svg>
<div class="fd" style="left:11.1px;top:1.8px;width:33.6px;height:19px"><svg style="position:absolute;left:3.4px;top:3.8px" width="11" height="10" viewBox="0 0 10 10" preserveAspectRatio="none"><path d="M5,0.5 L9.5,2.7 L9.5,7.3 L5,9.7 L0.5,7.3 L0.5,2.7 Z" fill="#8e8f9d" stroke="#7a7b88" stroke-width="0.7"/><path d="M5,0.9 L9,2.8 L5,4.8 L1,2.8 Z" fill="#fbfbfd"/><path d="M0.8,3.1 L5,5.1 L5,9.4 L0.8,7.2 Z" fill="#a597b3"/><path d="M5,5.1 L9.2,3.1 L9.2,7.2 L5,9.4 Z" fill="#858896"/><path d="M1.8,5 L4,6 L4,7.6 L1.8,6.5 Z" fill="#c7a9cf"/></svg><i class="ar" style="left:23.4px;top:8px"></i></div>
<span class="fl">结束</span>
<div class="fd" style="left:69.7px;top:1.8px;width:52.6px;height:18.2px"><span class="fv">-2</span><i class="ar" style="left:43.6px;top:8px"></i></div>
</div>
<div id="wm2"><svg width="46" height="40" viewBox="0 0 46 40" style="position:absolute;left:0;top:0"><ellipse cx="16" cy="14" rx="14" ry="12" fill="#fbfcfc"/><ellipse cx="31" cy="25" rx="12" ry="10.4" fill="#fbfcfc"/><circle cx="11" cy="10" r="1.7" fill="#d9dadb"/><circle cx="20.4" cy="10" r="1.7" fill="#d9dadb"/></svg><span style="position:absolute;left:48px;top:0px">UG—NX教程</span></div>
<div id="wm"><span class="c">头条</span><span class="l"> @</span><span class="c">吾思</span><span class="l">UGupup</span></div>

</body>
</html>
